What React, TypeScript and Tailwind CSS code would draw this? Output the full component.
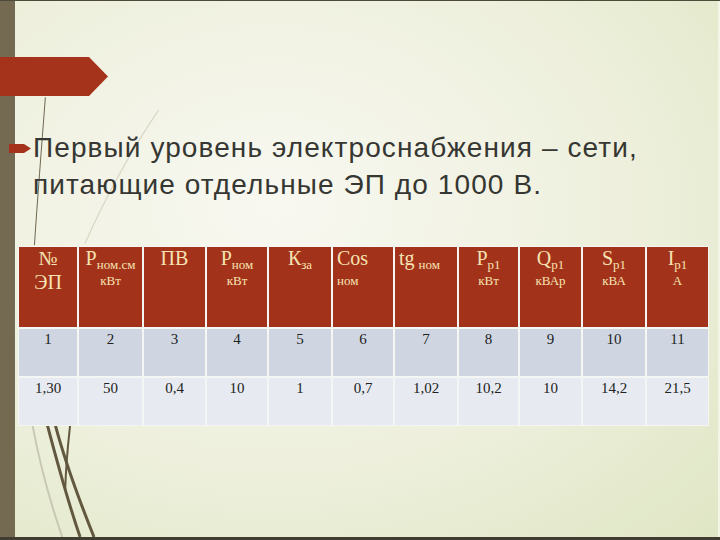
import React from 'react'

const serif = { fontFamily: '"Liberation Serif", "Times New Roman", serif' }

interface HeadProps {
  main: string
  sub?: string
  unit?: string
  second?: string
  align?: 'center' | 'left'
  gapSub?: boolean
}

function HeadCell({ main, sub, unit, second, align = 'center', gapSub }: HeadProps) {
  const alignCls = align === 'center' ? 'items-center' : 'items-start pl-[4px]'
  return (
    <div className={`flex flex-col bg-[#a3321a] pt-[1px] text-[#f6e3b2] ${alignCls}`} style={serif}>
      <div className="h-[21px] whitespace-nowrap text-[20px] leading-[21px]">
        {main}
        {sub && (
          <span className={`relative top-[4px] text-[13px] leading-[13px] ${gapSub ? 'ml-[4px]' : ''}`}>{sub}</span>
        )}
      </div>
      {second && <div className="mt-[2px] text-[20px] leading-[22px]">{second}</div>}
      {unit && <div className="mt-[4px] text-[13px] leading-[15px]">{unit}</div>}
    </div>
  )
}

const ROW_A = ['1', '2', '3', '4', '5', '6', '7', '8', '9', '10', '11']
const ROW_B = ['1,30', '50', '0,4', '10', '1', '0,7', '1,02', '10,2', '10', '14,2', '21,5']

function Decor() {
  return (
    <svg className="pointer-events-none absolute inset-0 h-full w-full" viewBox="0 0 720 540" fill="none">
      <path d="M43 97 C 39 150, 35 200, 32 246" stroke="#6e6650" strokeWidth="1" />
      <path d="M157 110 C 130 150, 105 195, 83 244" stroke="#d9d8c4" strokeWidth="1.2" />
      <path d="M30 427 C 38 470, 48 505, 60 540" stroke="#c9c8b4" strokeWidth="2" />
      <path d="M45 427 C 55 465, 66 505, 78 540" stroke="#62583f" strokeWidth="3" />
      <path d="M53 427 C 63 465, 78 505, 92 540" stroke="#62583f" strokeWidth="3" />
      <path d="M68 427 C 66 445, 64 462, 63 492" stroke="#62583f" strokeWidth="2" />
    </svg>
  )
}

export default function App() {
  return (
    <div className="relative h-[540px] w-[720px] overflow-hidden border-t border-b-[3px] border-t-[#4d4a3a] border-b-[#3f3d32] bg-[radial-gradient(ellipse_at_38%_38%,#f8f8f1_0%,#eef0dd_55%,#dfe6c4_100%)]">
      <Decor />
      <div className="relative flex h-full">
        <div className="w-[15px] shrink-0 bg-[#746a51]" />
        <div className="flex flex-1 flex-col border-r-[2px] border-r-[#f3f5e6] pr-[4px]">
          {/* banner */}
          <div className="-ml-[15px] mt-[56px] h-[39px] w-[108px] bg-[#a5331b] [clip-path:polygon(0_0,89px_0,100%_50%,89px_100%,0_100%)]" />

          {/* title */}
          <div className="mt-[33px] flex items-start">
            <svg className="-ml-[6px] mt-[15px] shrink-0" width="22" height="9" viewBox="0 0 22 9">
              <polygon points="0,0 15,0 22,4.5 15,9 0,9" fill="#a5331b" />
            </svg>
            <p
              className="ml-[2px] text-[28px] leading-[37px] tracking-[1.1px] text-[#363632]"
              style={{ fontFamily: '"Liberation Sans", Arial, sans-serif' }}
            >
              Первый уровень электроснабжения – сети,
              <br />
              питающие отдельные ЭП до 1000 В.
            </p>
          </div>

          {/* table */}
          <div className="ml-[3px] mt-[43px] grid w-[691px] grid-cols-[58px_63px_61px_60px_62px_60px_62px_59px_61px_62px_61px] grid-rows-[80px_47px_47px] gap-[2px] bg-[#f4f6f4] p-[1px]">
            <HeadCell main="№" second="ЭП" />
            <HeadCell main="P" sub="ном.см" unit="кВт" />
            <HeadCell main="ПВ" />
            <HeadCell main="P" sub="ном" unit="кВт" />
            <HeadCell main="К" sub="за" />
            <HeadCell main="Cos" align="left" unit="ном" />
            <HeadCell main="tg" sub="ном" align="left" gapSub />
            <HeadCell main="P" sub="р1" unit="кВт" />
            <HeadCell main="Q" sub="р1" unit="кВАр" />
            <HeadCell main="S" sub="р1" unit="кВА" />
            <HeadCell main="I" sub="р1" unit="А" />
            {ROW_A.map((v, i) => (
              <div key={`a${i}`} className="bg-[#cfd6e2] pt-[2px] text-center text-[15px] leading-[16px] text-[#222]" style={serif}>
                {v}
              </div>
            ))}
            {ROW_B.map((v, i) => (
              <div key={`b${i}`} className="bg-[#e7ebf1] pt-[2px] text-center text-[15px] leading-[16px] text-[#222]" style={serif}>
                {v}
              </div>
            ))}
          </div>
        </div>
      </div>
    </div>
  )
}
